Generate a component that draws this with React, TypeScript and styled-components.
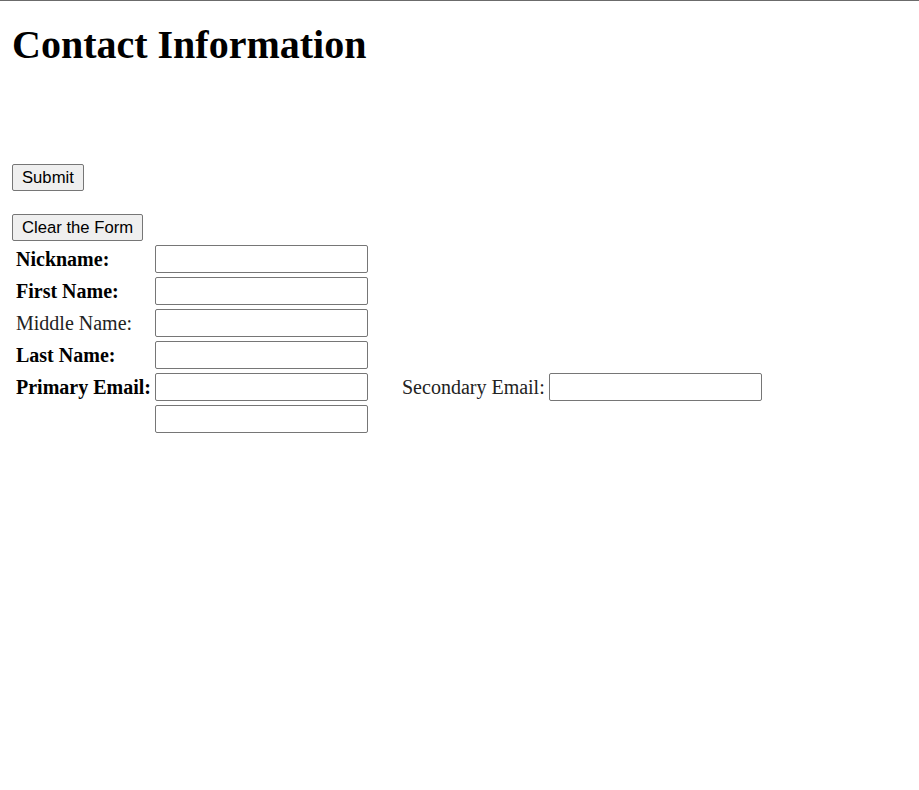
import React from "react";
import styled, { createGlobalStyle } from "styled-components";

const Global = createGlobalStyle`
  html, body { margin: 0; padding: 0; background: #fff; }
  body {
    border-top: 1px solid #6b6b6b;
    font-family: "Liberation Serif", "Times New Roman", serif;
    color: #000;
  }
`;

const Page = styled.div`
  padding: 0 12px;
`;

const Title = styled.h1`
  margin: 23px 0 0;
  font-family: "Liberation Serif", "Times New Roman", serif;
  font-weight: bold;
  font-size: 40px;
  line-height: 42px;
  height: 42px;
`;

const ButtonStack = styled.div`
  display: flex;
  flex-direction: column;
  align-items: flex-start;
  gap: 23px;
  margin-top: 98px;
`;

const Btn = styled.button`
  font-family: "Liberation Sans", Arial, sans-serif;
  font-size: 16.67px;
  line-height: 19px;
  height: 27px;
  padding: 2px 9px;
  background: #efefef;
  color: #000;
  border: 1px solid #767676;
  border-radius: 2px;
  cursor: pointer;
`;

const Grid = styled.div`
  display: grid;
  grid-template-columns: 143px 213px 34px auto 213px;
  justify-content: start;
  row-gap: 4px;
  align-items: center;
  margin-top: 4px;
`;

const Label = styled.span<{ $bold?: boolean }>`
  font-family: "Liberation Serif", "Times New Roman", serif;
  font-size: 20px;
  font-weight: ${(p) => (p.$bold ? "bold" : "normal")};
  color: ${(p) => (p.$bold ? "#000" : "#222")};
  padding-left: 4px;
  white-space: nowrap;
`;

const SecLabel = styled(Label)`
  padding-left: 0;
  padding-right: 4px;
`;

const Field = styled.input`
  box-sizing: border-box;
  width: 213px;
  height: 28px;
  border: 1px solid #767676;
  border-radius: 2px;
  padding: 2px 3px;
  font-size: 16px;
  background: #fff;
`;

const Spacer = styled.span``;

const rows: { label: string; bold: boolean }[] = [
  { label: "Nickname:", bold: true },
  { label: "First Name:", bold: true },
  { label: "Middle Name:", bold: false },
  { label: "Last Name:", bold: true },
];

export default function App() {
  return (
    <>
      <Global />
      <Page>
        <Title>Contact Information</Title>
        <ButtonStack>
          <Btn type="button">Submit</Btn>
          <Btn type="button">Clear the Form</Btn>
        </ButtonStack>
        <Grid>
          {rows.map((r) => (
            <React.Fragment key={r.label}>
              <Label $bold={r.bold}>{r.label}</Label>
              <Field type="text" />
              <Spacer />
              <Spacer />
              <Spacer />
            </React.Fragment>
          ))}
          <Label $bold>Primary Email:</Label>
          <Field type="text" />
          <Spacer />
          <SecLabel>Secondary Email:</SecLabel>
          <Field type="text" />
          <Spacer />
          <Field type="text" />
          <Spacer />
          <Spacer />
          <Spacer />
        </Grid>
      </Page>
    </>
  );
}
